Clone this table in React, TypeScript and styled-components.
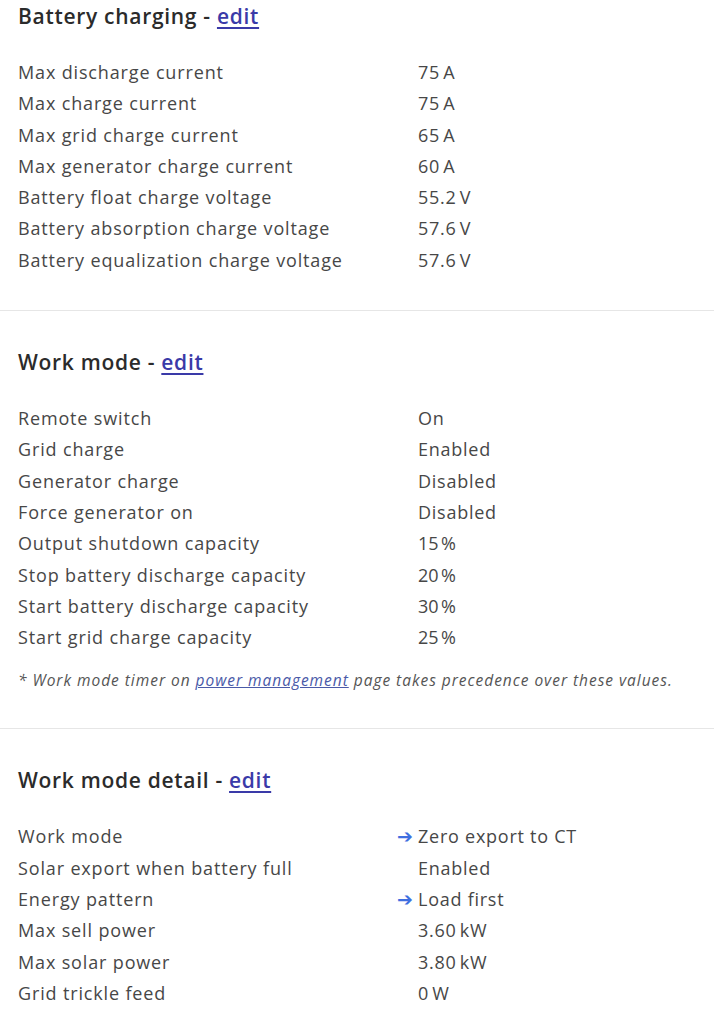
import React from "react";
import styled, { createGlobalStyle } from "styled-components";

const Global = createGlobalStyle`
  html, body { margin: 0; padding: 0; background: #fff; }
  body { font-family: "Open Sans", "Noto Sans", sans-serif; color: #444; }
`;

const Page = styled.main`
  display: flex;
  flex-direction: column;
`;

const Section = styled.section<{ $first?: boolean; $last?: boolean }>`
  padding: ${(p) => (p.$first ? "1px" : "36px")} 18px ${(p) => (p.$last ? "0" : "34px")};
  border-bottom: ${(p) => (p.$last ? "none" : "1px solid #e6e6e6")};
`;

const Heading = styled.h2`
  margin: 0 0 26px;
  font-size: 21px;
  line-height: 30px;
  font-weight: 600;
  color: #2b2b2b;
  letter-spacing: 0.7px;
`;

const EditLink = styled.a`
  color: #3a3aa8;
  text-decoration: underline;
  text-underline-offset: 3px;
  text-decoration-thickness: 2px;
`;

const Table = styled.div`
  display: grid;
  grid-template-columns: 400px 1fr;
`;

const Cell = styled.div`
  font-size: 18px;
  line-height: 31.3px;
  color: #474747;
  letter-spacing: 0.85px;
  white-space: nowrap;
`;

const Value = styled(Cell)`
  display: flex;
  letter-spacing: 0.75px;
`;

const Arrow = styled.span`
  width: 21px;
  margin-left: -21px;
  color: #3f6fe0;
  font-size: 19px;
  display: inline-flex;
  align-items: center;
`;

const Note = styled.p`
  margin: 17px 0 4px;
  font-size: 15.5px;
  line-height: 20px;
  font-style: italic;
  color: #555;
  letter-spacing: 0.97px;
`;

const NoteLink = styled.a`
  color: #4a5aa8;
  text-decoration: underline;
`;

type Row = { label: string; value: string; arrow?: boolean };

const battery: Row[] = [
  { label: "Max discharge current", value: "75\u202FA" },
  { label: "Max charge current", value: "75\u202FA" },
  { label: "Max grid charge current", value: "65\u202FA" },
  { label: "Max generator charge current", value: "60\u202FA" },
  { label: "Battery float charge voltage", value: "55.2\u202FV" },
  { label: "Battery absorption charge voltage", value: "57.6\u202FV" },
  { label: "Battery equalization charge voltage", value: "57.6\u202FV" },
];

const workMode: Row[] = [
  { label: "Remote switch", value: "On" },
  { label: "Grid charge", value: "Enabled" },
  { label: "Generator charge", value: "Disabled" },
  { label: "Force generator on", value: "Disabled" },
  { label: "Output shutdown capacity", value: "15\u202F%" },
  { label: "Stop battery discharge capacity", value: "20\u202F%" },
  { label: "Start battery discharge capacity", value: "30\u202F%" },
  { label: "Start grid charge capacity", value: "25\u202F%" },
];

const detail: Row[] = [
  { label: "Work mode", value: "Zero export to CT", arrow: true },
  { label: "Solar export when battery full", value: "Enabled" },
  { label: "Energy pattern", value: "Load first", arrow: true },
  { label: "Max sell power", value: "3.60\u202FkW" },
  { label: "Max solar power", value: "3.80\u202FkW" },
  { label: "Grid trickle feed", value: "0\u202FW" },
];

const Rows = ({ rows }: { rows: Row[] }) => (
  <Table>
    {rows.map((r) => (
      <React.Fragment key={r.label}>
        <Cell>{r.label}</Cell>
        <Value>
          {r.arrow && <Arrow>➔</Arrow>}
          {r.value}
        </Value>
      </React.Fragment>
    ))}
  </Table>
);

export default function App() {
  return (
    <Page>
      <Global />
      <Section $first>
        <Heading>
          Battery charging - <EditLink href="#">edit</EditLink>
        </Heading>
        <Rows rows={battery} />
      </Section>
      <Section>
        <Heading>
          Work mode - <EditLink href="#">edit</EditLink>
        </Heading>
        <Rows rows={workMode} />
        <Note>
          * Work mode timer on <NoteLink href="#">power management</NoteLink> page takes precedence over these values.
        </Note>
      </Section>
      <Section $last>
        <Heading>
          Work mode detail - <EditLink href="#">edit</EditLink>
        </Heading>
        <Rows rows={detail} />
      </Section>
    </Page>
  );
}
